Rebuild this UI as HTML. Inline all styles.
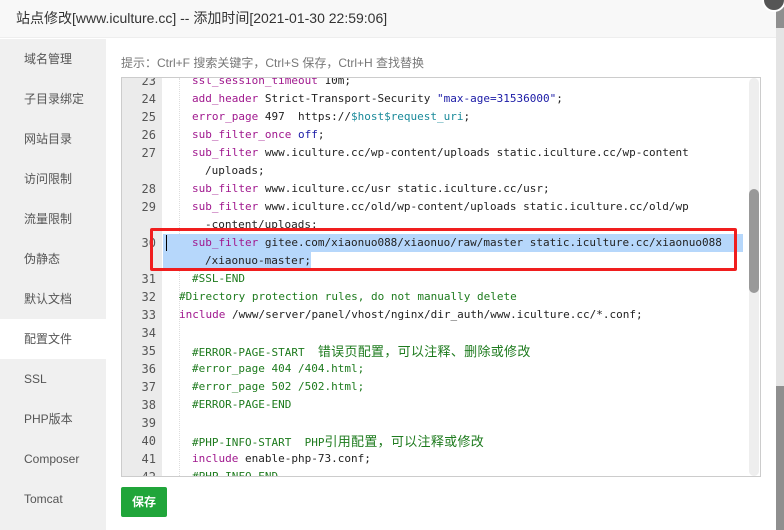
<!DOCTYPE html>
<html><head><meta charset="utf-8"><style>
*{margin:0;padding:0;box-sizing:border-box}
body{width:784px;height:530px;overflow:hidden;background:#fff;font-family:"Liberation Sans","Noto Sans CJK SC",sans-serif;position:relative}
.title{position:absolute;left:0;top:0;width:776px;height:38px;background:#f8f8f8;border-bottom:1px solid #eee;font-size:14px;color:#333;line-height:37px;padding-left:16px}
.side{position:absolute;left:0;top:39px;width:106px;height:491px;background:#f0f0f0}
.side div{height:40px;line-height:40px;padding-left:24px;font-size:12px;color:#555}
.side .act{background:#fff}
.tip{position:absolute;left:121px;top:54px;font-size:12px;color:#777}
.ed{position:absolute;left:121px;top:77px;width:640px;height:400px;border:1px solid #ccc;overflow:hidden;background:#fff}
.gut{position:absolute;left:0;top:0;width:40px;height:100%;background:#ebebeb}
.guide{position:absolute;left:57px;top:0;height:100%;border-left:1px dotted #ddd}
.lines{position:absolute;left:0;top:-6px;width:100%;font-family:"DejaVu Sans Mono","Noto Sans CJK SC",monospace;font-size:11px}
.l{height:18px;line-height:18px;white-space:pre;position:relative}
.n{position:absolute;left:0;width:34px;text-align:right;color:#555;font-size:12px}
.c{position:absolute;left:57px;color:#222}
.k{color:#a0188e}.s{color:#1a1aa6}.v{color:#1a8a9a}.cm{color:#1e7b1e}
.zh{font-family:"Noto Sans CJK SC",sans-serif;font-size:13px;letter-spacing:0.3px}
.hl{background:#b6d7fb}
.cur{position:absolute;left:44px;top:1px;width:1px;height:16px;background:#000}
.sb{position:absolute;right:1px;top:0;width:10px;height:100%;background:#eee;border-radius:5px}
.th{position:absolute;right:1px;top:111px;width:10px;height:104px;background:#999;border-radius:5px}
.red{position:absolute;left:150px;top:228px;width:587px;height:43px;border:3px solid #f01e1e;border-radius:2px}
.btn{position:absolute;left:121px;top:487px;width:46px;height:30px;background:#20a53a;color:#fff;font-size:12px;font-weight:bold;text-align:center;line-height:30px;border-radius:2px}
.rs{position:absolute;left:776px;top:0;width:8px;height:530px;background:#8f8f8f}
.rs2{position:absolute;left:776px;top:28px;width:8px;height:358px;background:#e4e4e4}
.x{position:absolute;left:762px;top:-12px;width:24px;height:24px;border-radius:50%;background:#555;border:2px solid #fff}
</style></head><body>
<div class="rs"></div><div class="rs2"></div>
<div class="title">站点修改[www.iculture.cc] -- 添加时间[2021-01-30 22:59:06]</div>
<div class="x"></div>
<div class="side">
<div>域名管理</div><div>子目录绑定</div><div>网站目录</div><div>访问限制</div><div>流量限制</div><div>伪静态</div><div>默认文档</div><div class="act">配置文件</div><div>SSL</div><div>PHP版本</div><div>Composer</div><div>Tomcat</div>
</div>
<div class="tip">提示：Ctrl+F 搜索关键字，Ctrl+S 保存，Ctrl+H 查找替换</div>
<div class="ed"><div class="gut"></div><div class="guide"></div>
<div class="lines">
<div class="l"><span class="n">23</span><span class="c" style="left:70px"><span class="k">ssl_session_timeout</span> 10m;</span></div>
<div class="l"><span class="n">24</span><span class="c" style="left:70px"><span class="k">add_header</span> Strict-Transport-Security <span class="s">"max-age=31536000"</span>;</span></div>
<div class="l"><span class="n">25</span><span class="c" style="left:70px"><span class="k">error_page</span> 497  https://<span class="v">$host$request_uri</span>;</span></div>
<div class="l"><span class="n">26</span><span class="c" style="left:70px"><span class="k">sub_filter_once</span> <span class="s">off</span>;</span></div>
<div class="l"><span class="n">27</span><span class="c" style="left:70px"><span class="k">sub_filter</span> www.iculture.cc/wp-content/uploads static.iculture.cc/wp-content</span></div>
<div class="l"><span class="c" style="left:83px">/uploads;</span></div>
<div class="l"><span class="n">28</span><span class="c" style="left:70px"><span class="k">sub_filter</span> www.iculture.cc/usr static.iculture.cc/usr;</span></div>
<div class="l"><span class="n">29</span><span class="c" style="left:70px"><span class="k">sub_filter</span> www.iculture.cc/old/wp-content/uploads static.iculture.cc/old/wp</span></div>
<div class="l"><span class="c" style="left:83px">-content/uploads;</span></div>
<div class="l"><span class="n">30</span><div class="hl" style="position:absolute;left:41px;width:580px;height:18px"></div><div class="cur"></div><span class="c" style="left:70px"><span class="k">sub_filter</span> gitee.com/xiaonuo088/xiaonuo/raw/master static.iculture.cc/xiaonuo088</span></div>
<div class="l"><div class="hl" style="position:absolute;left:41px;width:148px;height:18px"></div><span class="c" style="left:83px">/xiaonuo-master;</span></div>
<div class="l"><span class="n">31</span><span class="c cm" style="left:70px">#SSL-END</span></div>
<div class="l"><span class="n">32</span><span class="c cm">#Directory protection rules, do not manually delete</span></div>
<div class="l"><span class="n">33</span><span class="c"><span class="k">include</span> /www/server/panel/vhost/nginx/dir_auth/www.iculture.cc/*.conf;</span></div>
<div class="l"><span class="n">34</span></div>
<div class="l"><span class="n">35</span><span class="c cm" style="left:70px">#ERROR-PAGE-START  <span class="zh">错误页配置，可以注释、删除或修改</span></span></div>
<div class="l"><span class="n">36</span><span class="c cm" style="left:70px">#error_page 404 /404.html;</span></div>
<div class="l"><span class="n">37</span><span class="c cm" style="left:70px">#error_page 502 /502.html;</span></div>
<div class="l"><span class="n">38</span><span class="c cm" style="left:70px">#ERROR-PAGE-END</span></div>
<div class="l"><span class="n">39</span></div>
<div class="l"><span class="n">40</span><span class="c cm" style="left:70px">#PHP-INFO-START  PHP<span class="zh">引用配置，可以注释或修改</span></span></div>
<div class="l"><span class="n">41</span><span class="c" style="left:70px"><span class="k">include</span> enable-php-73.conf;</span></div>
<div class="l"><span class="n">42</span><span class="c cm" style="left:70px">#PHP-INFO-END</span></div>
</div>
<div class="sb"></div><div class="th"></div>
</div>
<div class="red"></div>
<div class="btn">保存</div>
</body></html>
